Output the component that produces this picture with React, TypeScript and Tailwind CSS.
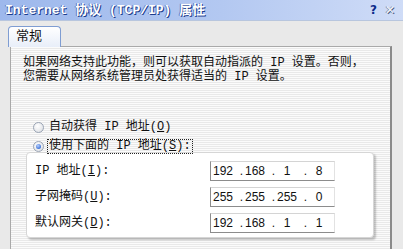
import React from "react";

const ui = "font-['Liberation_Mono','Noto_Sans_CJK_SC',monospace]";

function Radio({ checked }: { checked?: boolean }) {
  return (
    <span className="w-[11px] h-[11px] rounded-full border border-[#9aa4b4] bg-[radial-gradient(circle_at_40%_35%,#ffffff_0%,#e4e6ea_70%,#c8ccd4_100%)] flex items-center justify-center shrink-0">
      {checked && (
        <span className="w-[5px] h-[5px] rounded-full bg-[radial-gradient(circle_at_40%_35%,#b8d0ff_0%,#3f74d8_70%,#2a58b8_100%)]" />
      )}
    </span>
  );
}

function IpField({ parts }: { parts: string[] }) {
  return (
    <div className="w-[125px] h-[20px] bg-white border-l border-b border-l-[#8c8c8c] border-b-[#8c8c8c] border-t border-t-[#d4d4d4] border-r border-r-[#e2e2e2] flex items-center pl-[1px] font-['Liberation_Sans',sans-serif] text-[12px] text-[#111]">
      {parts.map((p, i) => (
        <React.Fragment key={i}>
          {i > 0 && <span className="w-[10px] text-right pr-[1px]">.</span>}
          <span className="w-[22px] text-center">{p}</span>
        </React.Fragment>
      ))}
    </div>
  );
}

function Row({ label, mn, parts }: { label: string; mn: string; parts: string[] }) {
  return (
    <div className="flex items-center h-[20px]">
      <span className="w-[175px] text-[12px] leading-[14px] text-[#111]">
        {label}(<u>{mn}</u>):
      </span>
      <IpField parts={parts} />
    </div>
  );
}

export default function App() {
  return (
    <div className={`w-[403px] h-[249px] overflow-hidden bg-[#e9e9e9] flex flex-col ${ui}`}>
      {/* title bar */}
      <div className="h-[21px] shrink-0 flex items-center justify-between pl-[5px] pr-[8px] bg-[linear-gradient(to_right,#9db8ec,#b3c8f1_55%,#cfdcf7)] border-b border-[#b8c6de]">
        <span className="text-[13px] font-bold text-white [text-shadow:1px_1px_0_#1c3c8c,-1px_0_0_#5a7cc8] leading-none">
          Internet 协议 (TCP/IP) 属性
        </span>
        <div className="flex items-center gap-[8px] text-[12px] font-bold font-['DejaVu_Sans',sans-serif] leading-none">
          <span className="text-[#0c2a8a]">?</span>
          <span className="text-[#f4f6fb] [text-shadow:1px_1px_0_#4a5a80,-1px_0_0_#8090b0]">✕</span>
        </div>
      </div>

      {/* tab */}
      <div className="pl-[8px] pt-[5px] shrink-0">
        <div className="relative z-10 w-[53px] h-[21px] -mb-[1px] rounded-t-[4px] border border-b-0 border-[#7f9dd2] bg-[linear-gradient(to_bottom,#ffffff,#e8eef9)] text-[13px] leading-[20px] pl-[7px] text-[#111]">
          常规
        </div>
      </div>

      {/* panel */}
      <div className="ml-[10px] w-[382px] flex-1 border-l border-t border-[#a9a9a9] border-r-2 border-r-[#8a8a8a] bg-[repeating-linear-gradient(to_bottom,#fbfbfb_0px,#fbfbfb_1px,#e9e9e9_1px,#e9e9e9_2px)]">
        <p className="pl-[12px] pt-[9px] text-[12px] leading-[14px] text-[#111]">
          如果网络支持此功能，则可以获取自动指派的 IP 设置。否则，
          <br />
          您需要从网络系统管理员处获得适当的 IP 设置。
        </p>

        <div className="ml-[22px] mt-[34px] h-[18px] flex items-center gap-[5px] text-[12px] text-[#111]">
          <Radio />
          <span>
            自动获得 IP 地址(<u>O</u>)
          </span>
        </div>
        <div className="relative z-10 ml-[22px] mt-[3px] h-[14px] flex items-center gap-[3px] text-[12px] text-[#111]">
          <Radio checked />
          <span className="border border-dotted border-[#222] px-[1px] leading-[13px]">
            使用下面的 IP 地址(<u>S</u>):
          </span>
        </div>

        <div className="ml-[15px] -mt-[1px] w-[348px] rounded-[4px] border border-[#d6d6d6] bg-white shadow-[2px_2px_2px_rgba(0,0,0,0.22)] pl-[8px] pt-[8px] pb-[4px] flex flex-col gap-[6px]">
          <Row label="IP 地址" mn="I" parts={["192", "168", "1", "8"]} />
          <Row label="子网掩码" mn="U" parts={["255", "255", "255", "0"]} />
          <Row label="默认网关" mn="D" parts={["192", "168", "1", "1"]} />
        </div>
      </div>
    </div>
  );
}
